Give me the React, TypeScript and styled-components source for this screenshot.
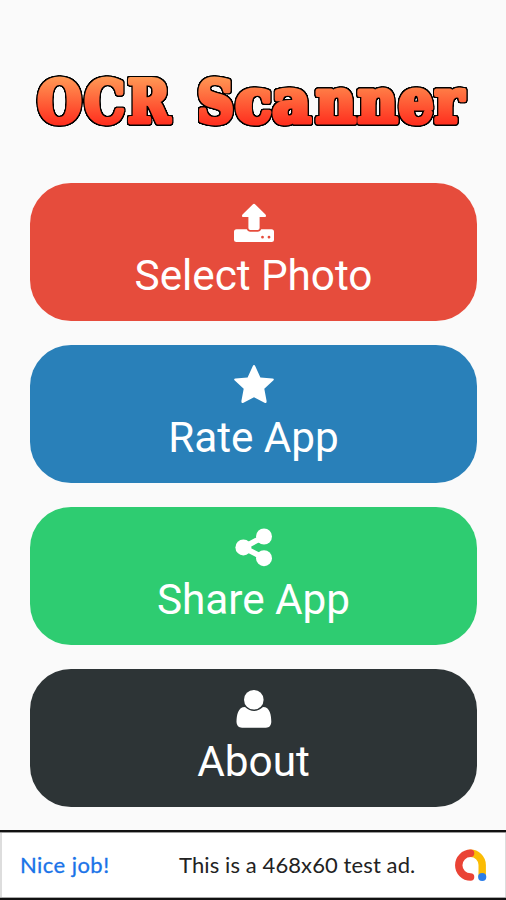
import React from "react";
import styled, { createGlobalStyle } from "styled-components";

const GlobalStyle = createGlobalStyle`
  * { box-sizing: border-box; }
  body { margin: 0; background: #fafafa; font-family: Roboto, "Liberation Sans", sans-serif; }
`;

const Screen = styled.main`
  width: 506px;
  height: 900px;
  display: flex;
  flex-direction: column;
  background: #fafafa;
  overflow: hidden;
`;

const Title = styled.h1`
  margin: 0;
  height: 183px;
  flex: none;
`;

const Wordmark = styled.svg`
  display: block;
  font-family: "DejaVu Serif", serif;
  font-weight: 700;
  stroke-linejoin: round;
`;

const Menu = styled.nav`
  display: flex;
  flex-direction: column;
  gap: 24.5px;
  padding: 0 29px 0 30px;
  height: 647px;
  flex: none;
`;

const MenuButton = styled.button<{ $color: string }>`
  display: flex;
  flex-direction: column;
  align-items: center;
  width: 100%;
  height: 137.6px;
  flex: none;
  padding: 20px 0 0;
  border: 0;
  border-radius: 41px;
  background: ${(p) => p.$color};
  color: #fff;
`;

const Icon = styled.svg`
  width: 40px;
  height: 40px;
  flex: none;
  fill: currentColor;
`;

const Label = styled.span`
  margin-top: 7px;
  font: 400 42.3px/52px Roboto, "Liberation Sans", sans-serif;
  letter-spacing: -0.05px;
  white-space: nowrap;
`;

const AdBanner = styled.aside`
  height: 70px;
  flex: none;
  display: flex;
  align-items: center;
  border-style: solid;
  border-color: #111;
  border-width: 2px 0;
  background: #fff;
  box-shadow: inset 0 1px #999, inset 0 -1px #aaa, inset 2px 0 #ddd, inset -1px 0 #ddd;
  padding: 0 17px 1px 20px;
  font: 400 22px/28px Lato, sans-serif;
  white-space: nowrap;
`;

const AdLead = styled.span`
  width: 159px;
  color: #1a73e8;
  letter-spacing: 0.45px;
  -webkit-text-stroke: 0.3px currentColor;
`;

const AdText = styled.span`
  flex: 1;
  color: #222;
  letter-spacing: 0.1px;
`;

const AdLogo = styled.svg`
  width: 36px;
  height: 36px;
`;

const items = [
  {
    label: "Select Photo",
    color: "#e64c3c",
    icon: (
      <path
        fillRule="evenodd"
        d="M20 .8Q20.7.8 21.3 1.5L31.5 11.4Q33 13.8 30.8 14H25.6V25Q25.6 27 23.6 27H16.4Q14.4 27 14.4 25V14H9.2Q7 13.8 8.5 11.4L18.7 1.5Q19.3.8 20 .8ZM2.5 26.3H12.8Q13.5 28.7 16 28.7H24Q26.5 28.7 27.2 26.3H37.5Q40 26.3 40 28.8V36.5Q40 39 37.5 39H2.5Q0 39 0 36.5V28.8Q0 26.3 2.5 26.3ZM28.5 32.8a1.4 1.4 0 1 0 0 2.8a1.4 1.4 0 0 0 0-2.8ZM35 32.8a1.4 1.4 0 1 0 0 2.8a1.4 1.4 0 0 0 0-2.8Z"
      />
    ),
  },
  {
    label: "Rate App",
    color: "#2980b9",
    icon: (
      <path d="M20 0Q20.8 0 21.3 1.2L26.4 12.6L38.5 13.5Q40.8 13.9 39.2 15.5L30.3 23.8L32.6 36Q32.8 38.9 30.5 37.8L20 32.2L9.5 37.8Q7.2 38.9 7.4 36L9.7 23.8L.8 15.5Q-.8 13.9 1.5 13.5L13.6 12.6L18.7 1.2Q19.2 0 20 0Z" />
    ),
  },
  {
    label: "Share App",
    color: "#2ecc71",
    icon: (
      <>
        <path d="M30 9.5L9.5 20.5L30 31" fill="none" stroke="currentColor" strokeWidth="5.6" />
        <circle cx="9.4" cy="20.4" r="8" />
        <circle cx="30" cy="9.5" r="8" />
        <circle cx="30" cy="31.2" r="8" />
      </>
    ),
  },
  {
    label: "About",
    color: "#2d3436",
    icon: (
      <>
        <circle cx="19.8" cy="10.8" r="9.8" />
        <path d="M11 18C4 18 2.5 26 2.5 33Q2.7 38.7 8 38.7H32Q37.1 38.7 37.3 33C37.3 26 36 18 29 18Q20 25.8 11 18Z" />
      </>
    ),
  },
];

export default function App() {
  return (
    <>
      <GlobalStyle />
      <Screen>
        <Title>
          <Wordmark width="506" height="183">
            <defs>
              <linearGradient id="flame" gradientUnits="userSpaceOnUse" x1="0" y1="-45" x2="0" y2="2">
                <stop offset="0" stopColor="#ff9955" />
                <stop offset="1" stopColor="#ff301f" />
              </linearGradient>
              <filter id="outline" x="-5%" y="-20%" width="110%" height="140%" colorInterpolationFilters="sRGB">
                <feMorphology in="SourceAlpha" operator="dilate" radius="1" result="edge" />
                <feGaussianBlur in="edge" stdDeviation=".7" result="soft" />
                <feComponentTransfer in="soft" result="rim">
                  <feFuncA type="linear" slope="1.9" intercept="0" />
                </feComponentTransfer>
                <feMerge>
                  <feMergeNode in="rim" />
                  <feMergeNode in="SourceGraphic" />
                </feMerge>
              </filter>
            </defs>
            <g filter="url(#outline)" fill="url(#flame)" stroke="url(#flame)" strokeWidth="4.9" fontSize="57.5">
              <text transform="translate(37.5 121.8) scale(.88 1)" x="0 53.5 102.5">OCR</text>
              <text transform="translate(199 121.8) scale(.88 1.02)" x="-2">S</text>
              <text transform="translate(235.5 121.8) scale(1.03 1.04)" x="0 36">ca</text>
              <text transform="translate(316 121.8) scale(.95 1.04)" x="0 44 87 125">nner</text>
            </g>
          </Wordmark>
        </Title>
        <Menu>
          {items.map((item) => (
            <MenuButton key={item.label} $color={item.color}>
              <Icon viewBox="0 0 40 40">{item.icon}</Icon>
              <Label>{item.label}</Label>
            </MenuButton>
          ))}
        </Menu>
        <AdBanner>
          <AdLead>Nice job!</AdLead>
          <AdText>This is a 468x60 test ad.</AdText>
          <AdLogo viewBox="0 0 36 36" fill="none" strokeWidth="7.4" strokeLinecap="round">
            <path d="M17.3 6.3A11.9 11.9 0 0 1 29.2 18V29" stroke="#fbbc04" />
            <path d="M17.6 6.3A11.85 11.85 0 0 0 17.6 30" stroke="#ea4335" />
            <circle cx="29.2" cy="30" r="4.1" fill="#2b7de9" />
          </AdLogo>
        </AdBanner>
      </Screen>
    </>
  );
}
